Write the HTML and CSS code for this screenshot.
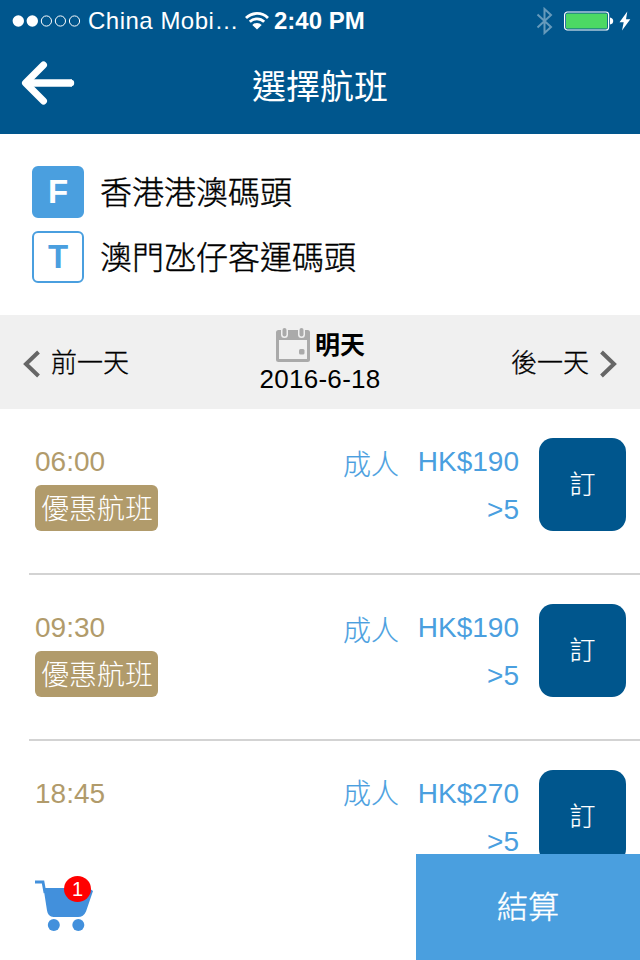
FILE: index.html
```html
<!DOCTYPE html>
<html lang="zh-Hant">
<head>
  <meta charset="UTF-8">
  <meta name="viewport" content="width=device-width, initial-scale=1.0">
  <title>選擇航班</title>
  <link rel="stylesheet" href="styles.css">
</head>
<body>
  <div class="app">
    <header class="header">
      <div class="status-bar">
        <svg class="signal" width="70" height="14" viewBox="0 0 70 14">
          <circle cx="6.3" cy="7" r="5.7" fill="#fff"/>
          <circle cx="20.3" cy="7" r="5.7" fill="#fff"/>
          <g fill="none" stroke="#fff" stroke-width="1">
            <circle cx="34.4" cy="7" r="5.1"/>
            <circle cx="48.4" cy="7" r="5.1"/>
            <circle cx="62.5" cy="7" r="5.1"/>
          </g>
        </svg>
        <span class="carrier">China Mobi…</span>
        <svg class="wifi" width="26" height="20" viewBox="0 0 26 20">
          <g fill="none" stroke="#fff" stroke-width="2.8">
            <path d="M2 7a15.600 15.600 0 0 1 22 0"/>
            <path d="M5.800 10.800a10.200 10.200 0 0 1 14.400 0"/>
          </g>
          <path d="M8.300 13.900a6.600 6.600 0 0 1 9.400 0L13 18.600z" fill="#fff"/>
        </svg>
        <span class="clock">2:40 PM</span>
        <svg class="bluetooth" width="18" height="28" viewBox="0 0 18 28">
          <path d="M1.500 7.500L15 20l-6.500 6V2L15 8 1.500 20.500" fill="none" stroke="#669abb" stroke-width="2"/>
        </svg>
        <svg class="battery" width="50" height="20" viewBox="0 0 50 20">
          <rect x="0.6" y="1" width="44" height="18" rx="2.8" fill="none" stroke="#fff" stroke-width="1.2"/>
          <rect x="2" y="2.400" width="41.200" height="15.200" rx="1.200" fill="#4cd964"/>
          <path d="M46 6.500q3.200.5 3.200 3.500T46 13.500z" fill="#fff"/>
        </svg>
        <svg class="bolt" width="12" height="20" viewBox="0 0 12 20">
          <path d="M8.300.5L.5 11.300h4.200L3 19.500 11.300 8.200H7z" fill="#fff"/>
        </svg>
      </div>
      <div class="nav-bar">
        <svg class="back" width="54" height="44" viewBox="0 0 54 44">
          <path d="M22.500 4L4.500 22l18 18" fill="none" stroke="#fff" stroke-width="7" stroke-linecap="round" stroke-linejoin="round"/>
          <path d="M5 22h46" stroke="#fff" stroke-width="7.600"/>
          <circle cx="50" cy="22" r="3.200" fill="#fff"/>
        </svg>
        <h1>選擇航班</h1>
      </div>
    </header>

    <section class="route">
      <div class="stop">
        <span class="stop-mark from">F</span>
        <span class="stop-name">香港港澳碼頭</span>
      </div>
      <div class="stop">
        <span class="stop-mark">T</span>
        <span class="stop-name">澳門氹仔客運碼頭</span>
      </div>
    </section>

    <section class="date-bar">
      <div class="day-link">
        <svg width="18" height="28" viewBox="0 0 18 28">
          <path d="M15.500 2L3 14l12.500 12" fill="none" stroke="#666" stroke-width="4"/>
        </svg>
        <span>前一天</span>
      </div>
      <div class="current">
        <div class="current-day">
          <svg width="36" height="36" viewBox="0 0 36 36">
            <rect x="1" y="3" width="34" height="32" rx="2.500" fill="#aaa"/>
            <rect x="4" y="13" width="28" height="19" fill="#f0f0f0"/>
            <rect x="6" y="0" width="7" height="11" rx="3.500" fill="#f0f0f0"/>
            <rect x="23" y="0" width="7" height="11" rx="3.500" fill="#f0f0f0"/>
            <rect x="7.500" y="1" width="4" height="8.500" rx="2" fill="#aaa"/>
            <rect x="24.500" y="1" width="4" height="8.500" rx="2" fill="#aaa"/>
            <rect x="24" y="22" width="5.500" height="5.500" rx="1.500" fill="#aaa"/>
          </svg>
          <span>明天</span>
        </div>
        <div class="current-date">2016-6-18</div>
      </div>
      <div class="day-link next">
        <span>後一天</span>
        <svg width="18" height="28" viewBox="0 0 18 28">
          <path d="M2.500 2L15 14 2.500 26" fill="none" stroke="#666" stroke-width="4"/>
        </svg>
      </div>
    </section>

    <main class="sailings">
      <div class="sailing">
        <div class="sailing-time">
          <div class="time">06:00</div>
          <span class="discount">優惠航班</span>
        </div>
        <div class="fare-type">成人</div>
        <div class="fare">
          <div>HK$190</div>
          <div class="seats">&gt;5</div>
        </div>
        <button class="book">訂</button>
      </div>
      <div class="sailing">
        <div class="sailing-time">
          <div class="time">09:30</div>
          <span class="discount">優惠航班</span>
        </div>
        <div class="fare-type">成人</div>
        <div class="fare">
          <div>HK$190</div>
          <div class="seats">&gt;5</div>
        </div>
        <button class="book">訂</button>
      </div>
      <div class="sailing regular">
        <div class="sailing-time">
          <div class="time">18:45</div>
        </div>
        <div class="fare-type">成人</div>
        <div class="fare">
          <div>HK$270</div>
          <div class="seats">&gt;5</div>
        </div>
        <button class="book">訂</button>
      </div>
    </main>

    <footer class="footer">
      <div class="cart">
        <svg width="60" height="54" viewBox="0 0 60 54">
          <path d="M0 3H8L10 14" fill="none" stroke="#4290dc" stroke-width="2.800"/>
          <path d="M8.500 9H54l4 3-7 20.500Q48.500 38 43 38H18.500Q13 38 12 31.500z" fill="#4290dc"/>
          <circle cx="18.800" cy="46" r="6" fill="#4290dc"/>
          <circle cx="43.300" cy="46" r="6" fill="#4290dc"/>
        </svg>
        <span class="cart-count">1</span>
      </div>
      <button class="checkout">結算</button>
    </footer>
  </div>
</body>
</html>
```
FILE: styles.css
```css
* {
  box-sizing: border-box;
}

body {
  margin: 0;
  background: #fff;
  color: #000;
  font-family: "Liberation Sans", "Noto Sans CJK TC", sans-serif;
  font-weight: 400;
}

svg {
  display: block;
  flex-shrink: 0;
}

button {
  border: none;
  padding: 0;
  font-family: inherit;
  color: #fff;
}

.app {
  width: 640px;
  height: 960px;
  display: flex;
  flex-direction: column;
  overflow: hidden;
}

/* Header */
.header {
  height: 134px;
  flex-shrink: 0;
  background: #00568d;
  color: #fff;
}

.status-bar {
  height: 40px;
  display: flex;
  align-items: center;
  padding: 1px 9px 0 12px;
  font-size: 24px;
  white-space: nowrap;
}

.carrier {
  width: 155px;
  margin-left: 6px;
  padding-top: 1px;
  letter-spacing: 0.5px;
}

.wifi {
  margin-left: 1px;
}

.clock {
  margin-left: 4px;
  padding-top: 1px;
  font-weight: bold;
}

.bluetooth {
  margin-left: auto;
}

.battery {
  margin-left: 10px;
}

.bolt {
  margin-left: 5px;
}

.nav-bar {
  height: 94px;
  display: grid;
  grid-template-columns: 120px 1fr 120px;
  align-items: center;
}

.back {
  margin: 0 0 8px 21px;
}

h1 {
  margin: 0 0 4px;
  font-family: "Noto Sans CJK TC", sans-serif;
  font-size: 34px;
  font-weight: 400;
  line-height: 50px;
  text-align: center;
}

/* Route */
.route {
  height: 181px;
  flex-shrink: 0;
  display: flex;
  flex-direction: column;
  gap: 13px;
  padding: 32px;
}

.stop {
  display: flex;
  align-items: center;
  gap: 16px;
}

.stop-mark {
  width: 52px;
  height: 52px;
  border: 2px solid #4a9fdf;
  border-radius: 6px;
  color: #4a9fdf;
  font-size: 33px;
  font-weight: bold;
  line-height: 48px;
  text-align: center;
}

.stop-mark.from {
  background: #4a9fdf;
  color: #fff;
}

.stop-name {
  height: 52px;
  font-family: "Noto Sans CJK TC", sans-serif;
  font-size: 32px;
  font-weight: 300;
  line-height: 48px;
  -webkit-text-stroke: 0.4px;
}

/* Date bar */
.date-bar {
  height: 94px;
  flex-shrink: 0;
  display: grid;
  grid-template-columns: 1fr 140px 1fr;
  padding: 0 23px;
  background: #f0f0f0;
}

.day-link {
  display: flex;
  align-items: center;
  gap: 10px;
  padding-top: 3px;
  font-size: 26px;
  font-weight: 300;
}

.day-link span {
  margin-top: -7px;
  -webkit-text-stroke: 0.3px;
}

.day-link.next {
  justify-content: flex-end;
}

.current {
  padding-top: 12px;
  text-align: center;
}

.current-day {
  display: flex;
  justify-content: center;
  align-items: center;
  gap: 4px;
  height: 36px;
  font-size: 25px;
  font-weight: bold;
}

.current-day span {
  margin-top: -4px;
}

.current-date {
  font-size: 26px;
  line-height: 33px;
  letter-spacing: 0.3px;
}

/* Sailings */
.sailings {
  flex: 1;
  min-height: 0;
  overflow: hidden;
}

.sailing {
  height: 166px;
  display: flex;
  align-items: flex-start;
  margin-left: 29px;
  padding: 29px 14px 0 6px;
  border-bottom: 2px solid #d3d3d3;
  font-size: 28px;
}

.sailing-time {
  width: 308px;
}

.time {
  height: 47px;
  line-height: 47px;
  color: #b19b6b;
}

.discount {
  display: block;
  width: 123px;
  height: 46px;
  padding-left: 1px;
  border-radius: 6px;
  background: #b19b6b;
  color: #fff;
  font-weight: 300;
  line-height: 50px;
  text-align: center;
}

.fare-type {
  width: 56px;
  padding-top: 4px;
  color: #4a9fdf;
  font-weight: 300;
  line-height: 47px;
  -webkit-text-stroke: 0.2px;
}

.regular .fare-type {
  padding-top: 1px;
}

.fare {
  width: 120px;
  color: #4a9fdf;
  line-height: 48px;
  text-align: right;
}

.book {
  width: 87px;
  height: 93px;
  margin-left: auto;
  padding-bottom: 4px;
  border-radius: 14px;
  background: #00568d;
  font-size: 26px;
  font-weight: 300;
  -webkit-text-stroke: 0.2px;
}

/* Footer */
.footer {
  height: 106px;
  flex-shrink: 0;
  display: flex;
  justify-content: space-between;
}

.cart {
  position: relative;
  padding: 25px 0 0 35px;
}

.cart-count {
  position: absolute;
  top: 22px;
  left: 64px;
  width: 27px;
  height: 26px;
  border-radius: 50%;
  background: #f00;
  color: #fff;
  font-size: 20px;
  line-height: 27px;
  text-align: center;
}

.checkout {
  width: 224px;
  height: 106px;
  padding-bottom: 6px;
  background: #4a9fdf;
  font-size: 31px;
  font-weight: 300;
  -webkit-text-stroke: 0.4px;
}
```
